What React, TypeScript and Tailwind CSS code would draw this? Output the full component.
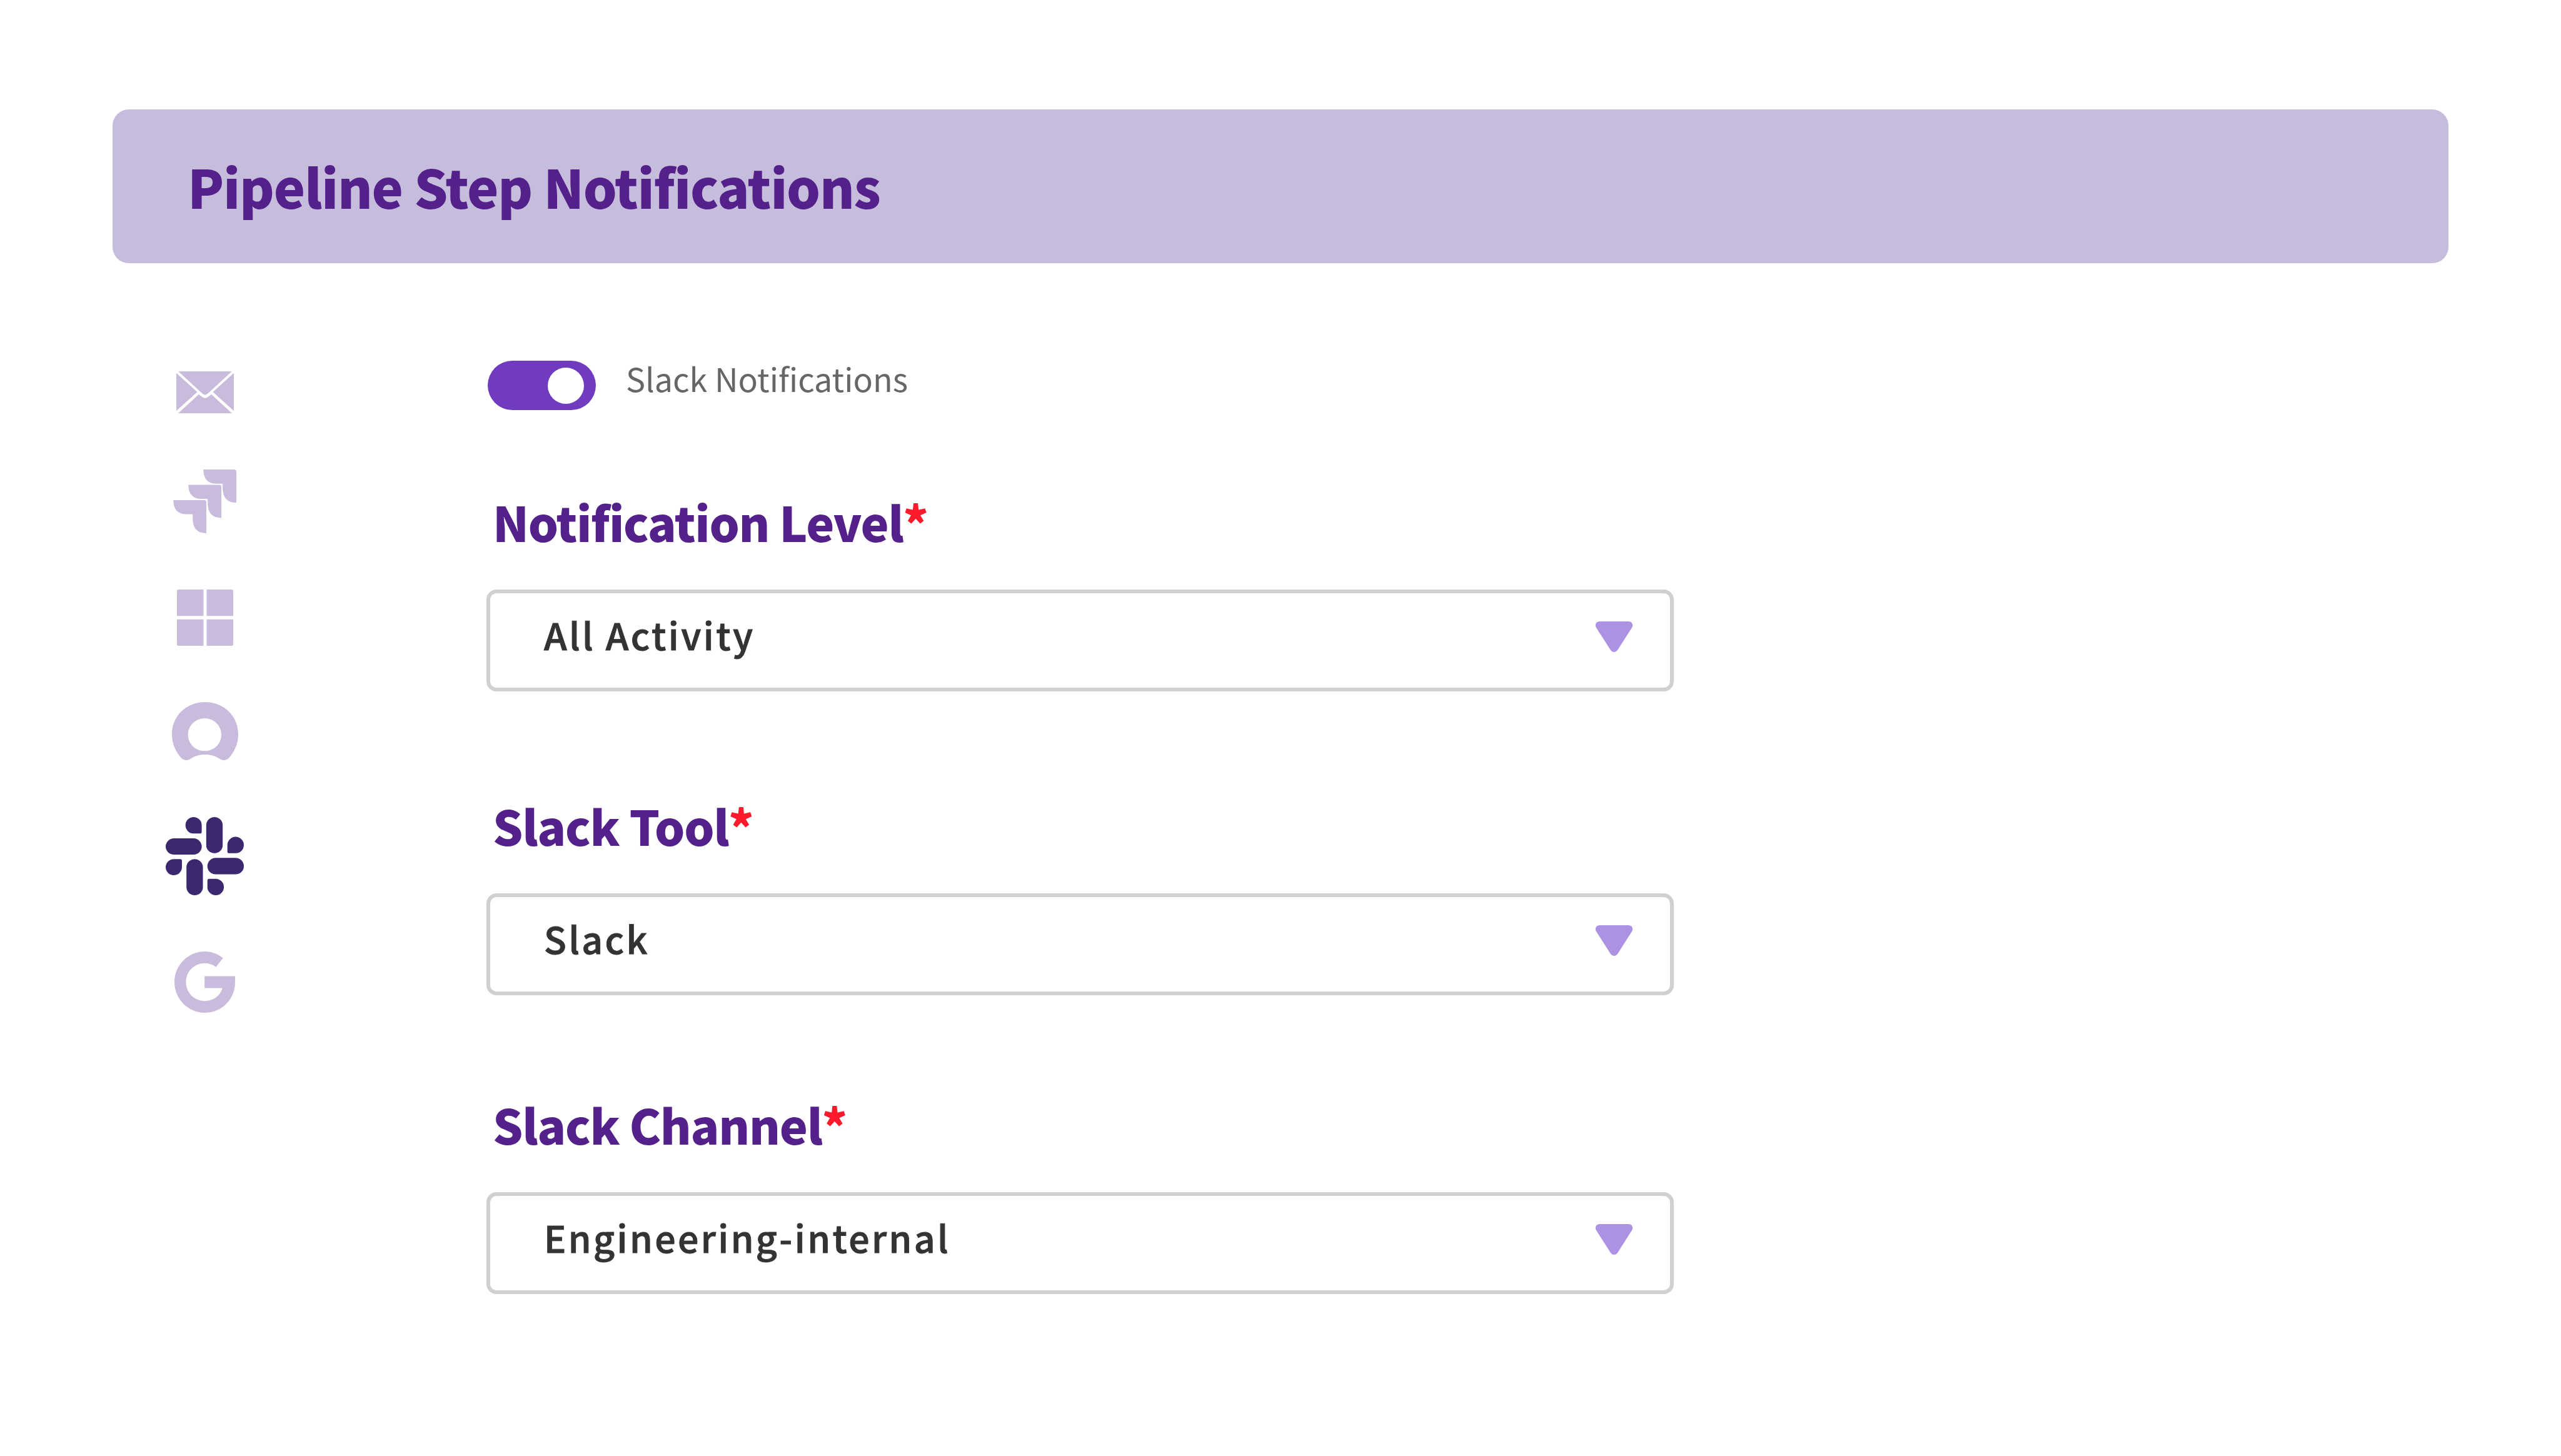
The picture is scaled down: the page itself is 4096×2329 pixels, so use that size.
const fields = [
  { label: "Notification Level", value: "All Activity", top: "mt-[128px]" },
  { label: "Slack Tool", value: "Slack", top: "mt-[164px]" },
  { label: "Slack Channel", value: "Engineering-internal", top: "mt-[156px]" },
];

function MailIcon() {
  return (
    <svg viewBox="178 142 294 201" preserveAspectRatio="none" className="w-[92px] h-[67px]" fill="#C9BBDC">
      <path d="M188 142H462L340 248Q325 262 310 248Z" />
      <path d="M178 150L285 241L178 332Z" />
      <path d="M472 150L365 241L472 332Z" />
      <path d="M188 343L293 252L310 265Q325 276 340 265L357 252L462 343Z" />
    </svg>
  );
}

function JiraIcon() {
  const d = "M317 613H475Q486 613 486 624V770Q416 770 416 700V680H385Q317 680 317 613Z";
  return (
    <svg viewBox="162 613 324 302" preserveAspectRatio="none" className="w-[101px] h-[102px]" fill="#C9BBDC">
      <path d={d} />
      <path d={d} transform="translate(-77 72.5)" />
      <path d={d} transform="translate(-154 145)" />
    </svg>
  );
}

function WindowsIcon() {
  return (
    <svg viewBox="182 1184 286 268" preserveAspectRatio="none" className="w-[90px] h-[90px]" fill="#C9BBDC">
      <path d="M192 1184H317V1310H182V1194Q182 1184 192 1184Z" />
      <path d="M333 1184H458Q468 1184 468 1194V1310H333Z" />
      <path d="M182 1326H317V1452H192Q182 1452 182 1442Z" />
      <path d="M333 1326H468V1442Q468 1452 458 1452H333Z" />
    </svg>
  );
}

function ChatIcon() {
  return (
    <svg viewBox="156 118 338 263" preserveAspectRatio="none" className="w-[106px] h-[94px]" fill="#C9BBDC">
      <path
        fillRule="evenodd"
        d="M325 118C230 118 156 180 156 262C156 305 175 340 205 370Q228 388 255 370C275 358 300 353 325 353C350 353 375 358 395 370Q422 388 445 370C475 340 494 305 494 262C494 180 420 118 325 118ZM323 191C370 191 408 224 408 264C408 305 370 337 323 337C276 337 238 305 238 264C238 224 276 191 323 191Z"
      />
    </svg>
  );
}

function SlackIcon() {
  return (
    <svg viewBox="126 632 399 348" preserveAspectRatio="none" className="w-[125px] h-[125px]" fill="#3C286E">
      <path d="M268 632A42 36.5 0 0 1 310 668.5V698Q310 705 303 705H268A41 36.5 0 0 1 268 632Z" />
      <rect x="126" y="727" width="184" height="72" rx="42" ry="36" />
      <rect x="333" y="632" width="84" height="161" rx="42" ry="36" />
      <path d="M483 720A42 36.5 0 0 1 483 793H448Q441 793 441 786V756A42 36 0 0 1 483 720Z" />
      <path d="M167 891A41 36 0 0 1 167 819H202Q209 819 209 826V855A42 36 0 0 1 167 891Z" />
      <rect x="232" y="819" width="84" height="161" rx="42" ry="36" />
      <rect x="339" y="814" width="186" height="73" rx="42" ry="36" />
      <path d="M381 980A42 36.5 0 0 0 381 907H346Q339 907 339 914V943A42 36.5 0 0 0 381 980Z" />
    </svg>
  );
}

function GoogleIcon() {
  return (
    <svg viewBox="170 1232 310 270" preserveAspectRatio="none" className="w-[97px] h-[98px]" fill="#C9BBDC">
      <path d="M418 1260L383 1300C365 1289 345 1284 325 1284C272 1284 229 1320 229 1367C229 1414 272 1450 325 1450C370 1450 405 1425 415 1393H324V1341H480V1367C480 1445 410 1502 325 1502C240 1502 170 1441 170 1367C170 1293 240 1232 325 1232C360 1232 392 1243 418 1260Z" />
    </svg>
  );
}

function Caret() {
  return (
    <svg viewBox="0 0 59 49" className="w-[59px] h-[49px] mb-[12px]" fill="#AD92E3">
      <path d="M7 0H52C58 0 61 5 58 10L35 46C32 50 27 50 24 46L1 10C-2 5 1 0 7 0Z" />
    </svg>
  );
}

export default function App() {
  return (
    <div className="w-full h-[2329px] bg-white px-[180px] pt-[175px] font-['Noto_Sans_CJK_SC',sans-serif]">
      <div className="h-[246px] rounded-[26px] bg-[#C6BCDC] flex items-center pl-[120px]">
        <h1 className="text-[85px] leading-none font-black tracking-[-1.3px] text-[#54218A] -mt-[3px]">Pipeline Step Notifications</h1>
      </div>

      <div className="flex">
        {/* channel icons */}
        <div className="w-[295px] pt-[173px] flex flex-col items-center gap-[90px]">
          <MailIcon />
          <JiraIcon />
          <WindowsIcon />
          <ChatIcon />
          <SlackIcon />
          <GoogleIcon />
        </div>

        <div className="ml-[303px] w-[1899px] pt-[156px]">
          <div className="flex items-center gap-[48px] pl-[2px]">
            <div className="w-[173px] h-[79px] rounded-full bg-[#713BC0] flex items-center justify-end pr-[19px]">
              <div className="w-[58px] h-[58px] rounded-full bg-white" />
            </div>
            <span className="text-[52px] leading-none text-[#666666] -mt-[24px]">Slack Notifications</span>
          </div>

          {fields.map((f) => (
            <div key={f.label} className={f.top}>
              <div className="pl-[10px] text-[76px] leading-[100px] font-black tracking-[-1.3px] text-[#54218A]">
                {f.label}
                <span className="text-[#FF1A2B]">*</span>
              </div>
              <div className="mt-[59px] h-[163px] rounded-[16px] border-[6px] border-[#D0D0D0] flex items-center justify-between pl-[86px] pr-[60px]">
                <span className="text-[59px] leading-none font-medium tracking-[3.4px] text-[#333333] [-webkit-text-stroke:0.9px_#333333] -mt-[20px]">{f.value}</span>
                <Caret />
              </div>
            </div>
          ))}
        </div>
      </div>
    </div>
  );
}
